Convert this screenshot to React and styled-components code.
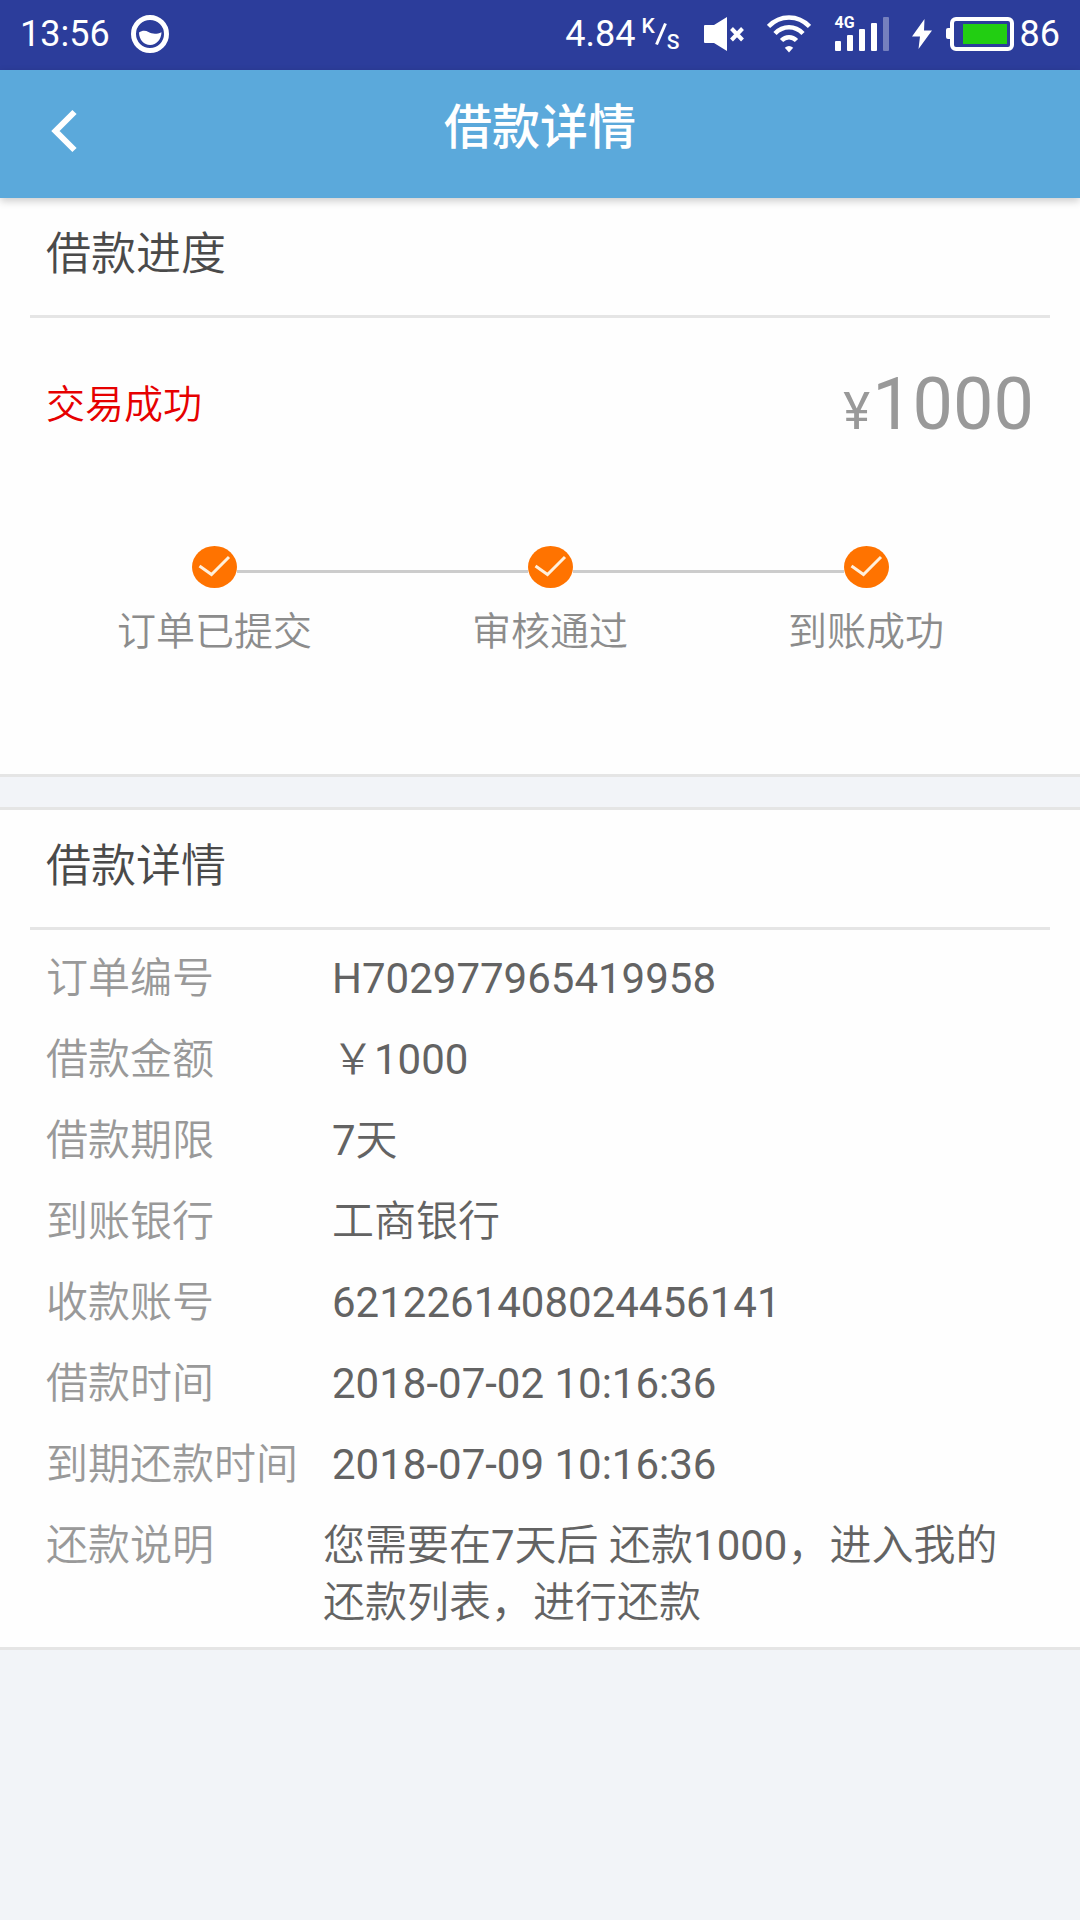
import styled, { createGlobalStyle } from "styled-components"

const steps = ["订单已提交", "审核通过", "到账成功"]

const details = [
  { label: "订单编号", value: "H702977965419958" },
  { label: "借款金额", value: "￥1000" },
  { label: "借款期限", value: "7天" },
  { label: "到账银行", value: "工商银行" },
  { label: "收款账号", value: "6212261408024456141" },
  { label: "借款时间", value: "2018-07-02 10:16:36" },
  { label: "到期还款时间", value: "2018-07-09 10:16:36" },
  { label: "还款说明", value: "您需要在7天后 还款1000，进入我的还款列表，进行还款", note: true },
]

const StatusBar = () => {
  return (
    <Bar>
      <BarGroup $gap={21}>
        <span>13:56</span>
        <svg width="38" height="38" viewBox="0 0 38 38" fill="none">
          <circle cx="19" cy="19" r="16.5" stroke="#fff" strokeWidth="5" />
          <path d="M8 17.5c3-2 6.500-2.200 9.500-.5 3.500 2 8 2.500 13 .2-.2 7-5 12.800-11.300 12.800S8.200 25 8 17.500z" fill="#fff" />
        </svg>
      </BarGroup>
      <BarGroup $gap={0}>
        <span>4.84</span>
        <SpeedUnit>
          <sup>K</sup>
          <svg width="12" height="24" viewBox="0 0 12 24">
            <path d="M1.500 22.500 10.500 1.500" stroke="#fff" strokeWidth="3" />
          </svg>
          <sub>S</sub>
        </SpeedUnit>
        <MuteIcon width="40" height="36" viewBox="0 0 40 36">
          <path d="M1 9h9L23 1v34L10 27H1a1 1 0 0 1-1-1V10a1 1 0 0 1 1-1z" fill="#fff" />
          <path d="M27.500 12.500 38.500 24M38.500 12.500l-11 11.500" stroke="#fff" strokeWidth="4" />
        </MuteIcon>
        <WifiIcon width="44" height="38" viewBox="0 0 44 38" fill="none" stroke="#fff" strokeWidth="4.500">
          <path d="M1.500 11.500C13-.5 31-.5 42.500 11.500" />
          <path d="M8 18.500c8-8.300 20-8.300 28 0" />
          <path d="M14.500 25.500c4.300-4.500 10.700-4.500 15 0" />
          <path d="M22 37.500 17.800 32.800q4.200-3.800 8.400 0z" fill="#fff" stroke="none" />
        </WifiIcon>
        <Signal>
          <svg width="54" height="34" viewBox="0 0 54 34" fill="#fff">
            <rect x="0" y="24" width="6" height="10" rx="1" />
            <rect x="12" y="18" width="6" height="16" rx="1" />
            <rect x="24" y="12" width="6" height="22" rx="1" />
            <rect x="36" y="6" width="6" height="28" rx="1" />
            <rect x="48" y="0" width="6" height="34" rx="1" opacity="0.350" />
          </svg>
          <SignalType>4G</SignalType>
        </Signal>
        <BoltIcon width="20" height="30" viewBox="0 0 20 30">
          <path d="M12.500 0 0 17.500h8L6.500 30 20 11.500h-8z" fill="#fff" />
        </BoltIcon>
        <svg width="68" height="36" viewBox="0 0 68 36">
          <rect x="0" y="12" width="6" height="11" rx="2" fill="#fff" />
          <rect x="6" y="3" width="60" height="30" rx="4" fill="none" stroke="#fff" strokeWidth="4" />
          <rect x="17" y="8" width="44" height="20" fill="#22ce12" />
        </svg>
        <Percent>86</Percent>
      </BarGroup>
    </Bar>
  )
}

const StepDot = () => (
  <svg width="45" height="42" viewBox="0 0 45 42" fill="none">
    <ellipse cx="22.500" cy="21" rx="22.500" ry="21" fill="#ff7300" />
    <path d="M7.500 20 19.500 28.500 37 11" stroke="#fff0dc" strokeWidth="3" />
  </svg>
)

const App = () => {
  return (
    <>
      <GlobalStyle />
      <StatusBar />
      <Header>
        <BackButton type="button" aria-label="返回">
          <svg width="26" height="44" viewBox="0 0 26 44" fill="none">
            <path d="M23.500 3 4.500 22l19 19" stroke="#fff" strokeWidth="6" />
          </svg>
        </BackButton>
        <Title>借款详情</Title>
      </Header>
      <main>
        <Section>
          <SectionTitle>借款进度</SectionTitle>
          <Summary>
            <State>交易成功</State>
            <Amount><small>¥</small>1000</Amount>
          </Summary>
          <Steps>
            {
              steps.map((step, index) => (
                <Step key={step}>
                  <Track>
                    <Line $hidden={index === 0} />
                    <StepDot />
                    <Line $hidden={index === steps.length - 1} />
                  </Track>
                  <StepLabel>{step}</StepLabel>
                </Step>
              ))
            }
          </Steps>
        </Section>
        <Section $divided>
          <SectionTitle>借款详情</SectionTitle>
          <Details>
            {
              details.map(({ label, value, note }) => (
                <Row key={label} $note={note}>
                  <dt>{label}</dt>
                  <dd>{value}</dd>
                </Row>
              ))
            }
          </Details>
        </Section>
      </main>
    </>
  )
}

const GlobalStyle = createGlobalStyle`
  * {
    box-sizing: border-box;
    margin: 0;
    padding: 0;
  }
  body {
    background: #f2f4f8;
    font-family: Roboto, "Noto Sans CJK SC DemiLight", "Noto Sans CJK SC", sans-serif;
    font-weight: 400;
    color: #636363;
  }
  svg {
    display: block;
    flex: none;
  }
`

const Bar = styled.div`
  display: flex;
  justify-content: space-between;
  height: 70px;
  padding: 0 20px 3px;
  background: #2c3d9b;
  color: #fff;
  font-size: 36px;
  line-height: 42px;
`

const BarGroup = styled.div`
  display: flex;
  align-items: center;
  gap: ${({ $gap }) => $gap}px;
`

const SpeedUnit = styled.span`
  display: flex;
  align-items: center;
  margin-left: 6px;
  font-weight: 500;
  line-height: 24px;

  sup {
    margin-bottom: 16px;
    font-size: 21px;
  }
  sub {
    margin-top: 16px;
    font-size: 21px;
  }
`

const MuteIcon = styled.svg`
  margin-left: 24px;
`

const WifiIcon = styled.svg`
  margin-left: 23px;
`

const Signal = styled.div`
  position: relative;
  margin-left: 24px;
`

const SignalType = styled.span`
  position: absolute;
  top: -3px;
  left: 0;
  font-size: 16px;
  font-weight: 700;
  line-height: 18px;
`

const BoltIcon = styled.svg`
  margin: 0 14px 0 23px;
`

const Percent = styled.span`
  margin-left: 6px;
`

const Header = styled.header`
  position: relative;
  display: grid;
  grid-template-columns: 1fr auto 1fr;
  align-items: start;
  padding: 28px 46px 34px;
  background: #5ba9db;
  box-shadow: 0 3px 8px rgba(0, 0, 0, 0.2);
`

const BackButton = styled.button`
  display: flex;
  align-items: center;
  justify-self: start;
  height: 66px;
  padding: 0 5px;
  border: none;
  background: none;
  cursor: pointer;
`

const Title = styled.h1`
  color: #fff;
  font-family: Roboto, "Noto Sans CJK SC", sans-serif;
  font-size: 48px;
  font-weight: 500;
  line-height: 60px;
`

const Section = styled.section`
  border-bottom: 3px solid #e5e5e5;
  background: #fefefe;
  ${({ $divided }) => $divided && `
    margin-top: 30px;
    border-top: 3px solid #e5e5e5;
  `}
`

const SectionTitle = styled.h2`
  margin: 0 30px;
  padding: 27px 16px 30px;
  border-bottom: 3px solid #e5e5e5;
  color: #4a4a4a;
  font-size: 45px;
  font-weight: 400;
  line-height: 60px;
`

const Summary = styled.div`
  display: flex;
  align-items: center;
  justify-content: space-between;
  padding: 45px 46px 0;
`

const State = styled.p`
  color: #e60000;
  font-size: 39px;
  line-height: 48px;
`

const Amount = styled.p`
  color: #999;
  font-size: 72px;
  line-height: 84px;

  small {
    margin-right: 2px;
    font-size: 51px;
    line-height: 51px;
  }
`

const Steps = styled.ol`
  display: flex;
  padding: 99px 56px 118px 37px;
  list-style: none;
`

const Step = styled.li`
  flex: 1 1 auto;
`

const Track = styled.div`
  display: flex;
`

const Line = styled.span`
  flex: 1;
  height: 3px;
  margin-top: 24px;
  background: ${({ $hidden }) => $hidden ? "transparent" : "#ccc"};
`

const StepLabel = styled.p`
  margin-top: 20px;
  color: #8c8c8c;
  font-size: 39px;
  line-height: 48px;
  text-align: center;
`

const Details = styled.dl`
  padding: 20px 46px 16px;
`

const Row = styled.div`
  display: flex;
  font-size: 42px;
  line-height: 57px;

  & + & {
    margin-top: 24px;
  }
  dt {
    flex: none;
    width: ${({ $note }) => $note ? 277 : 286}px;
    color: #999;
  }
`

export default App
